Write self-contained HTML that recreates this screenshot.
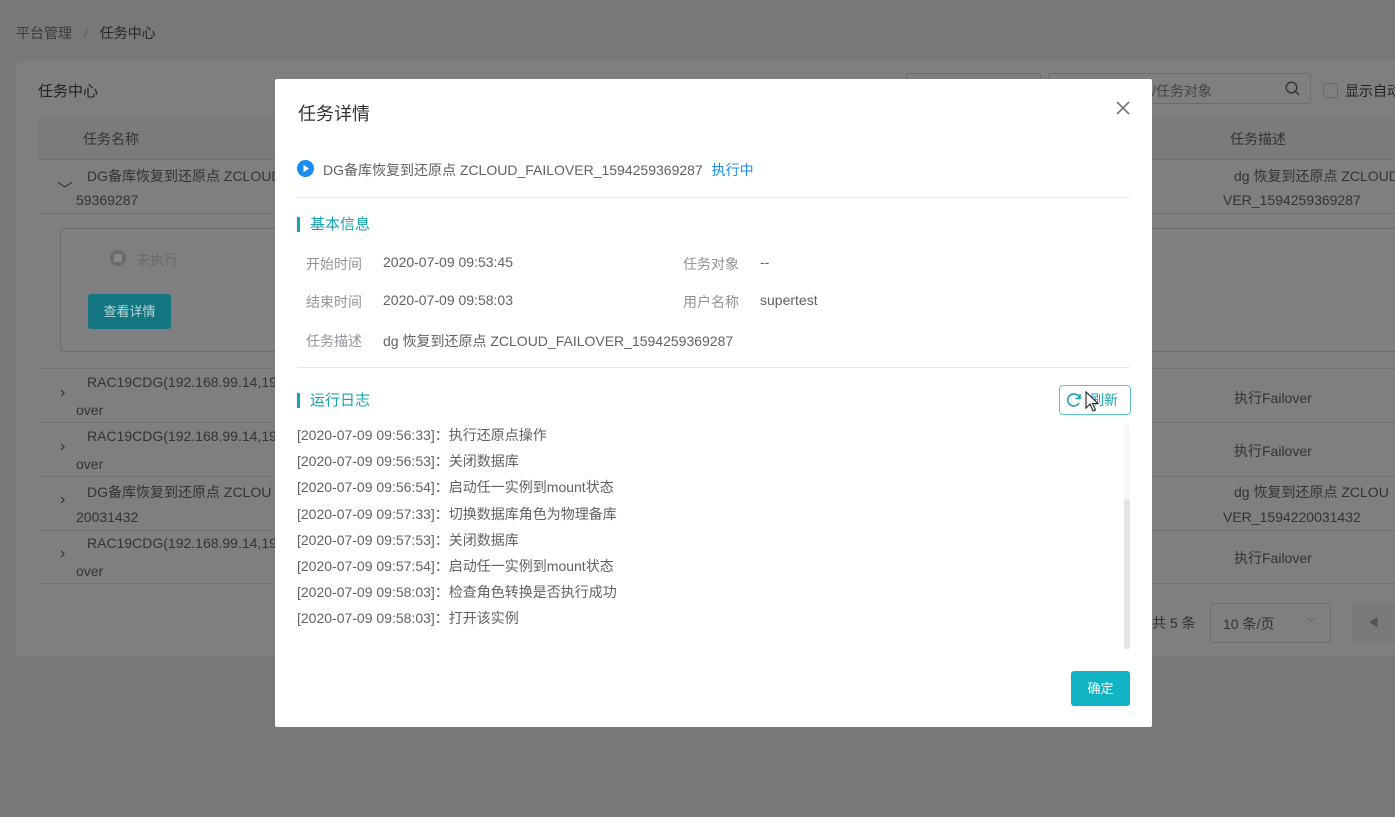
<!DOCTYPE html>
<html><head><meta charset="utf-8"><style>
*{margin:0;padding:0;box-sizing:border-box}
body{width:1395px;height:817px;overflow:hidden;background:#777879;font-family:"Liberation Sans","Noto Sans CJK SC",sans-serif;font-size:14px;color:#2c2c2c;position:relative}
.a{position:absolute;white-space:nowrap}
.line{position:absolute;height:1px;background:#717171}
.m{position:absolute;left:275px;top:79px;width:877px;height:648px;background:#fff;border-radius:2px}
.m .a{color:#606266}
.lbl{color:#909399!important}
.hr{position:absolute;left:22px;width:833px;height:1px;background:#e8e8e8}
.sec{color:#17a3b3!important;font-size:15px;padding-left:10px;border-left:3px solid #17a3b3;line-height:15px}
</style></head><body>
<div class="a" style="left:16px;top:23px;color:#3a3a3a">平台管理 <span style="color:#5a5a5a;margin:0 8px">/</span> <span style="color:#262626">任务中心</span></div>
<div style="position:absolute;left:16px;top:61px;width:1400px;height:595px;background:#7f7f7f;border-radius:4px"></div>
<div class="a" style="left:38px;top:80px;color:#222;font-size:15px">任务中心</div>
<div style="position:absolute;left:906px;top:73px;width:135px;height:31px;border:1px solid #6d6d6d;border-radius:3px"></div>
<div style="position:absolute;left:1048px;top:73px;width:263px;height:31px;border:1px solid #6d6d6d;border-radius:3px"></div>
<div class="a" style="left:1152px;top:81px;color:#444">/任务对象</div>
<svg class="a" style="left:1285px;top:81px" width="15" height="15"><circle cx="6.5" cy="6.5" r="5.3" fill="none" stroke="#333" stroke-width="1.4"/><path d="M10.5 10.5L14 14" stroke="#333" stroke-width="1.4"/></svg>
<div class="a" style="left:1323px;top:83px;width:15px;height:15px;border:1px solid #6a6a6a;border-radius:2px"></div>
<div class="a" style="left:1345px;top:81px;color:#222">显示自动</div>
<div style="position:absolute;left:38px;top:117px;width:1400px;height:42px;background:#7b7b7b"></div>
<div class="a" style="left:83px;top:129px;color:#333">任务名称</div>
<div class="a" style="left:1230px;top:129px;color:#333">任务描述</div>
<div class="line" style="left:38px;top:159px;width:1400px"></div>
<div class="a" style="left:57px;top:176px;color:#333;font-size:16px">﹀</div>
<div class="a" style="left:87px;top:166px;color:#333">DG备库恢复到还原点 ZCLOUD</div>
<div class="a" style="left:76px;top:192px;color:#333">59369287</div>
<div class="a" style="left:1234px;top:166px;color:#333">dg 恢复到还原点 ZCLOUD</div>
<div class="a" style="left:1223px;top:192px;color:#333">VER_1594259369287</div>
<div class="line" style="left:38px;top:213px;width:1400px"></div>
<div style="position:absolute;left:60px;top:228px;width:1400px;height:124px;border:1px solid #6c6c6c;border-radius:3px"></div>
<div class="a" style="left:110px;top:250px;width:16px;height:16px;border-radius:50%;background:#6a6a6a;border:4px solid #6a6a6a"><div style="width:8px;height:8px;background:#888;margin:0"></div></div>
<div class="a" style="left:136px;top:250px;color:#6a6a6a">未执行</div>
<div class="a" style="left:88px;top:294px;width:83px;height:35px;background:#137680;border-radius:3px;color:#b9d7da;font-size:13px;text-align:center;line-height:35px">查看详情</div>
<div class="line" style="left:38px;top:368px;width:1400px"></div>
<div class="line" style="left:38px;top:422px;width:1400px"></div>
<div class="line" style="left:38px;top:476px;width:1400px"></div>
<div class="line" style="left:38px;top:530px;width:1400px"></div>
<div class="line" style="left:38px;top:583px;width:1400px"></div>
<div class="a" style="left:60px;top:384px;color:#333;font-size:16px">›</div>
<div class="a" style="left:87px;top:374px;color:#333">RAC19CDG(192.168.99.14,19</div><div class="a" style="left:76px;top:402px;color:#333">over</div>
<div class="a" style="left:60px;top:438px;color:#333;font-size:16px">›</div>
<div class="a" style="left:87px;top:428px;color:#333">RAC19CDG(192.168.99.14,19</div><div class="a" style="left:76px;top:456px;color:#333">over</div>
<div class="a" style="left:60px;top:491px;color:#333;font-size:16px">›</div>
<div class="a" style="left:87px;top:482px;color:#333">DG备库恢复到还原点 ZCLOU</div><div class="a" style="left:76px;top:509px;color:#333">20031432</div>
<div class="a" style="left:60px;top:545px;color:#333;font-size:16px">›</div>
<div class="a" style="left:87px;top:535px;color:#333">RAC19CDG(192.168.99.14,19</div><div class="a" style="left:76px;top:563px;color:#333">over</div>
<div class="a" style="left:1234px;top:388px;color:#333">执行Failover</div>
<div class="a" style="left:1234px;top:441px;color:#333">执行Failover</div>
<div class="a" style="left:1234px;top:482px;color:#333">dg 恢复到还原点 ZCLOU</div>
<div class="a" style="left:1223px;top:509px;color:#333">VER_1594220031432</div>
<div class="a" style="left:1234px;top:548px;color:#333">执行Failover</div>
<div class="a" style="left:1152px;top:613px;color:#333">共 5 条</div>
<div style="position:absolute;left:1210px;top:603px;width:121px;height:40px;border:1px solid #6d6d6d;border-radius:3px"></div>
<div class="a" style="left:1223px;top:614px;color:#333">10 条/页</div>
<div class="a" style="left:1306px;top:614px;color:#5a5a5a;font-size:10px">﹀</div>
<div style="position:absolute;left:1352px;top:603px;width:50px;height:40px;background:#7a7a7a;border-radius:3px"></div>
<div class="a" style="left:1368px;top:614px;color:#555;font-size:11px">◀</div>

<div class="m">
<div class="a" style="left:23px;top:21px;font-size:18px;color:#303133!important">任务详情</div>
<svg class="a" style="left:841px;top:22px" width="14" height="14"><path d="M1 1L13 13M13 1L1 13" stroke="#777" stroke-width="1.6"/></svg>
<svg class="a" style="left:22px;top:81px" width="17" height="17"><circle cx="8.5" cy="8.5" r="8.5" fill="#1a8cf0"/><path d="M6.5 4.8L12 8.5 6.5 12.2z" fill="#fff"/></svg>
<div class="a" style="left:48px;top:81px;font-size:14px">DG备库恢复到还原点 ZCLOUD_FAILOVER_1594259369287 <span style="color:#1a8cf0;margin-left:5px">执行中</span></div>
<div class="hr" style="top:118px"></div>
<div class="a sec" style="left:22px;top:138px">基本信息</div>
<div class="a lbl" style="left:31px;top:175px">开始时间</div><div class="a" style="left:108px;top:175px">2020-07-09 09:53:45</div>
<div class="a lbl" style="left:408px;top:175px">任务对象</div><div class="a" style="left:485px;top:175px">--</div>
<div class="a lbl" style="left:31px;top:213px">结束时间</div><div class="a" style="left:108px;top:213px">2020-07-09 09:58:03</div>
<div class="a lbl" style="left:408px;top:213px">用户名称</div><div class="a" style="left:485px;top:213px">supertest</div>
<div class="a lbl" style="left:31px;top:252px">任务描述</div><div class="a" style="left:108px;top:252px">dg 恢复到还原点 ZCLOUD_FAILOVER_1594259369287</div>
<div class="hr" style="top:288px"></div>
<div class="a sec" style="left:22px;top:314px">运行日志</div>
<div class="a" style="left:784px;top:306px;width:72px;height:30px;border:1px solid #5cc4cf;border-radius:4px;color:#17a3b3!important;font-size:14px;line-height:28px;padding-left:30px">刷新</div>
<svg class="a" style="left:791px;top:313px" width="16" height="16"><path d="M13.5 6A6 6 0 1 0 13 11" fill="none" stroke="#17a3b3" stroke-width="1.6"/><path d="M14 2V6.5H9.5" fill="none" stroke="#17a3b3" stroke-width="1.6"/></svg>
<svg class="a" style="left:810px;top:312px" width="14" height="22"><path d="M1 1V17L5 13L8 20L10.5 19L7.5 12.5H13Z" fill="#fff" stroke="#222" stroke-width="1.1"/></svg>
<div style="position:absolute;left:22px;top:343px;line-height:26.2px;color:#606266;font-size:14px">
[2020-07-09 09:56:33]：执行还原点操作<br>[2020-07-09 09:56:53]：关闭数据库<br>[2020-07-09 09:56:54]：启动任一实例到mount状态<br>[2020-07-09 09:57:33]：切换数据库角色为物理备库<br>[2020-07-09 09:57:53]：关闭数据库<br>[2020-07-09 09:57:54]：启动任一实例到mount状态<br>[2020-07-09 09:58:03]：检查角色转换是否执行成功<br>[2020-07-09 09:58:03]：打开该实例</div>
<div style="position:absolute;left:849px;top:345px;width:6px;height:226px;background:#f6f8f9;border-radius:3px"></div>
<div style="position:absolute;left:849px;top:420px;width:6px;height:150px;background:#e0e5e7;border-radius:3px"></div>
<div class="a" style="left:796px;top:592px;width:59px;height:35px;background:#0fb3c4;border-radius:3px;color:#fff!important;font-size:13px;text-align:center;line-height:35px">确定</div>
</div>
</body></html>
